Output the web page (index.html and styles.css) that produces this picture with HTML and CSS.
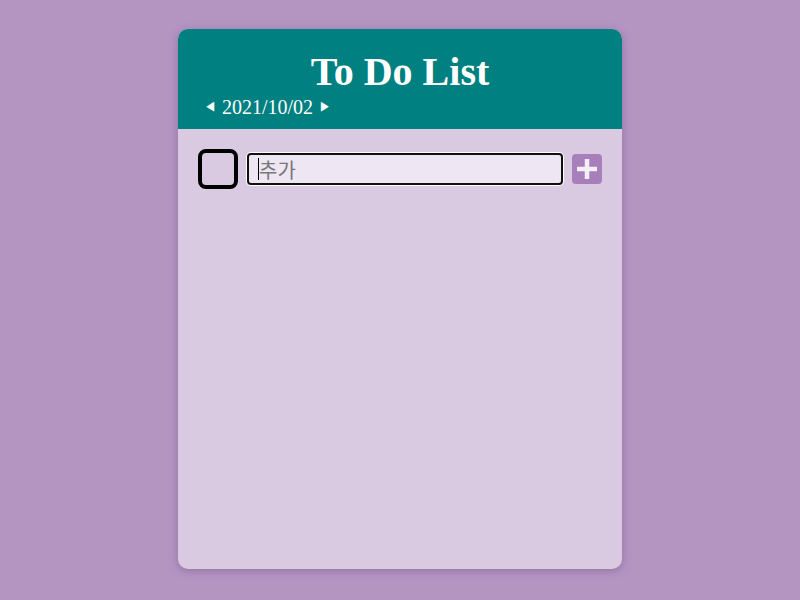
FILE: index.html
```html
<!DOCTYPE html>
<html lang="ko">
<head>
<meta charset="utf-8">
<title>To Do List</title>
<link rel="stylesheet" href="styles.css">
</head>
<body>
<div class="card">
  <header class="card-header">
    <h1 class="title">To Do List</h1>
    <div class="date-nav">
      <span class="arrow">&#9664;</span>
      <span class="date">2021/10/02</span>
      <span class="arrow">&#9654;</span>
    </div>
  </header>
  <main class="card-body">
    <div class="add-row">
      <span class="check"></span>
      <div class="input-wrap"><span class="caret"></span><span class="placeholder">추가</span></div>
      <button class="add-btn" aria-label="add">
        <svg width="20" height="20" viewBox="0 0 20 20"><path d="M10 0v20M0 10h20" stroke="#f4eef7" stroke-width="4.5"/></svg>
      </button>
    </div>
  </main>
</div>
</body>
</html>
```
FILE: styles.css
```css
html, body { margin: 0; padding: 0; }
body {
  background: #b495c2;
  font-family: "Liberation Serif", serif;
  height: 600px;
  padding-top: 29px;
  box-sizing: border-box;
}
.card {
  width: 444px;
  height: 540px;
  margin: 0 auto;
  background: #dacae1;
  border-radius: 10px;
  overflow: hidden;
  box-shadow: 0 2px 8px rgba(80, 50, 100, 0.35);
  display: flex;
  flex-direction: column;
}
.card-header {
  background: #008080;
  color: #fff;
  height: 100px;
  box-sizing: border-box;
  padding: 20px 26px 0;
}
.title {
  margin: 0;
  text-align: center;
  font-size: 40px;
  line-height: 46px;
  font-weight: bold;
}
.date-nav {
  display: flex;
  align-items: center;
  gap: 6px;
  font-size: 20px;
  line-height: 24px;
  margin-top: 0;
}
.arrow { font-size: 12px; }
.card-body {
  flex: 1;
  padding: 20px 20px;
}
.add-row {
  display: flex;
  align-items: center;
  gap: 9px;
}
.check {
  width: 32px;
  height: 32px;
  border: 4px solid #000;
  border-radius: 8px;
  flex: none;
}
.input-wrap {
  flex: 1;
  height: 28px;
  margin: 0;
  border: 2px solid #101010;
  border-radius: 4px;
  box-shadow: 0 0 0 1px #fff;
  background: #efe6f3;
  display: flex;
  align-items: center;
  padding-left: 9px;
  font-family: "Noto Sans CJK KR", sans-serif;
  font-size: 20px;
}
.caret {
  width: 1px;
  height: 22px;
  background: #000;
}
.placeholder { color: #777; }
.add-btn {
  width: 30px;
  height: 30px;
  border: none;
  border-radius: 4px;
  background: #a67fbb;
  padding: 0;
  display: flex;
  align-items: center;
  justify-content: center;
  flex: none;
}
```
